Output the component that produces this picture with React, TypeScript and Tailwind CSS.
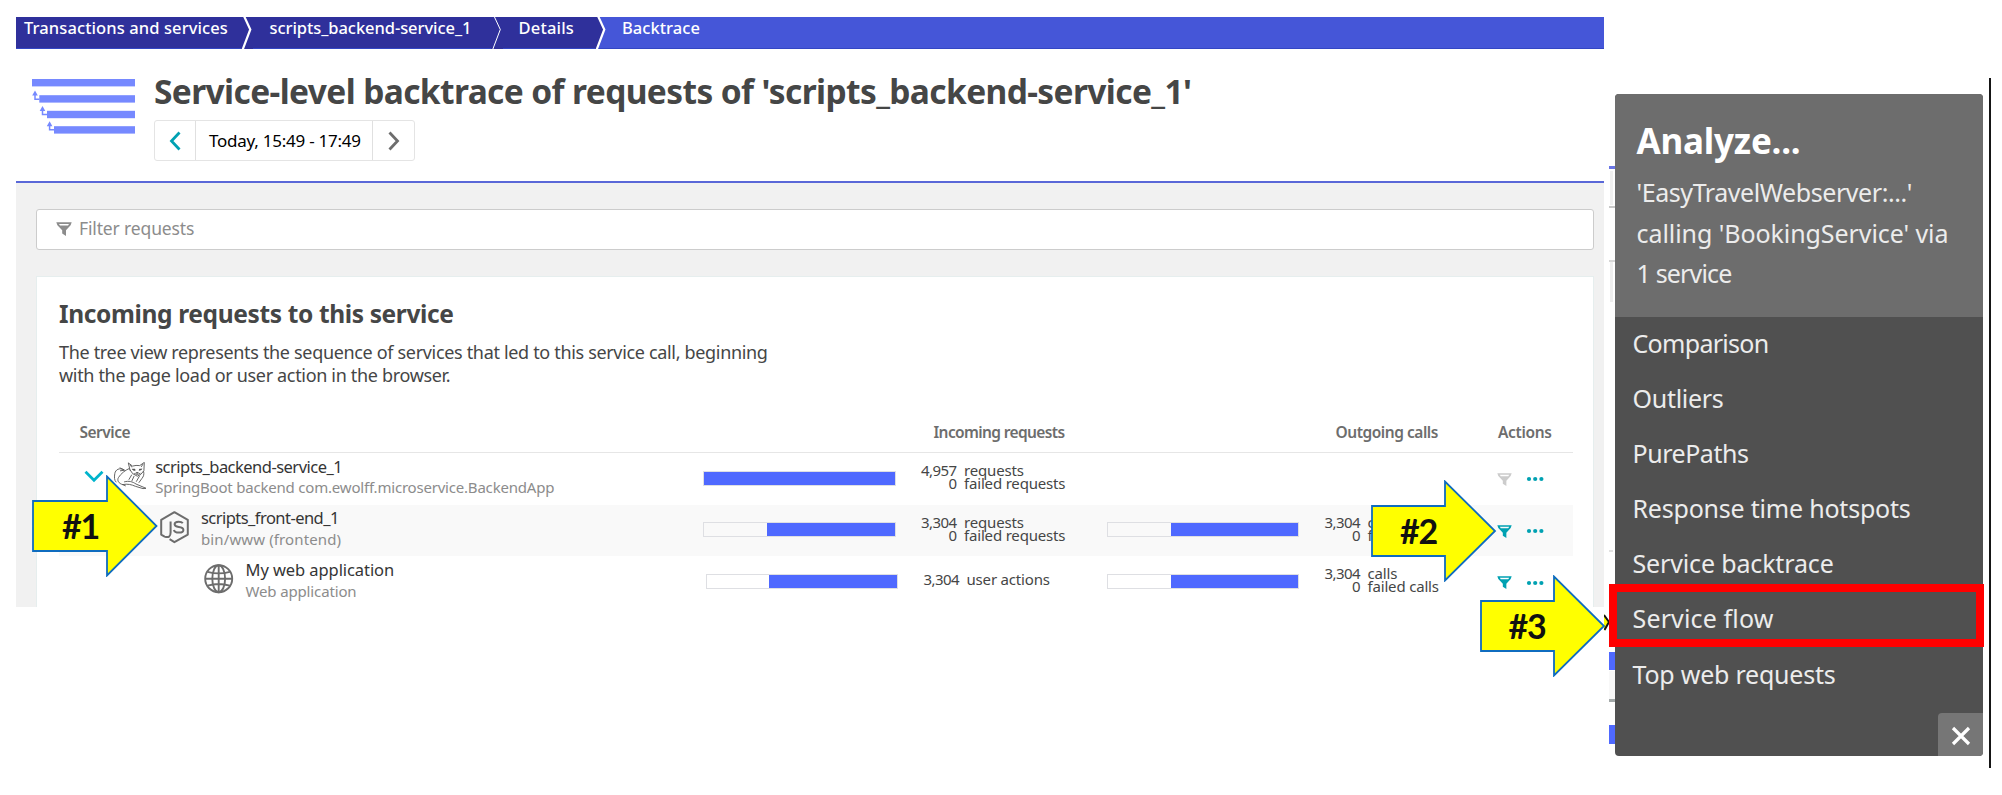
import type { ReactNode } from "react";

function Separator({ thin = false, last = false }: { thin?: boolean; last?: boolean }) {
  return (
    <svg width="12" height="32" viewBox="0 0 12 32" className="shrink-0">
      <path d="M0 0H3L9.5 12.5L1.5 32H0Z" fill="#2f309b" />
      {!last && <path d="M3 0H12V32H1.5L9.5 12.5Z" fill="#2f309b" />}
      <path d="M3 -1L9.3 12.5L1.5 33" fill="none" stroke="#fff" strokeWidth={thin ? 1 : 2.2} />
    </svg>
  );
}

function Funnel({ className }: { className: string }) {
  return (
    <svg width="16" height="15" viewBox="0 0 16 15" className={className}>
      <path
        fillRule="evenodd"
        fill="currentColor"
        d="M0.3 0.3H15.7L14.6 3.2L10 8.2V14L6.2 11.6V8.2L1.4 3.2ZM3 2L4 3.6H12L13 2Z"
      />
    </svg>
  );
}

function Dots() {
  return (
    <svg width="18" height="6" viewBox="0 0 18 6" fill="#00a1b2" className="block">
      <circle cx="3" cy="3" r="2.1" />
      <circle cx="9.2" cy="3" r="2.1" />
      <circle cx="15.4" cy="3" r="2.1" />
    </svg>
  );
}

function BacktraceIcon() {
  return (
    <svg width="104" height="56" viewBox="0 0 104 56" className="shrink-0" fill="#7689ff">
      <rect x="0" y="0" width="103" height="7.4" />
      <rect x="7.3" y="16.2" width="95.7" height="7.4" />
      <rect x="15" y="31.8" width="88" height="7.4" />
      <rect x="22" y="47.2" width="81" height="7.4" />
      <path d="M3 11.5L5.8 16.5H0.2ZM10.5 27L13.3 32H7.7ZM17.6 42.2L20.4 47.2H14.8Z" />
      <path
        d="M3 16V20.2H7.5M10.5 31V35.5H15M17.6 46.5V50.8H22"
        fill="none"
        stroke="#7689ff"
        strokeWidth="1.5"
      />
    </svg>
  );
}

function CatIcon() {
  return (
    <svg
      width="35"
      height="28"
      viewBox="0 0 35 28"
      fill="none"
      stroke="#555"
      strokeWidth="0.9"
      strokeLinejoin="round"
      strokeLinecap="round"
    >
      <path d="M17 8L15.3 0.9L19.5 4.1Q23 3 26.7 3.6L31.3 0.4L30.9 8.6Q28.6 12.7 24.3 14.2Q18.8 12.3 17 8Z" />
      <path d="M17.3 2.8L18.6 5M29.8 2.4L28.4 4.6M19.3 7.2L22 8.4M28.8 7L26.2 8.3M23.6 10.5H25.2L24.4 11.4ZM21.6 11.6L24.4 12.5L27 11.4" />
      <path d="M20.4 7.6H21.6M26.8 7.5H27.8" strokeWidth="1.6" />
      <path d="M16.2 6.5C12 8.4 8 11.5 5.5 15.5C3.8 18.3 5.6 21.6 9.6 22.6" />
      <path d="M10.5 7.6C6.5 5.4 2.5 7.6 1.8 11.5C1.2 15 1.2 18.5 3 20" />
      <path d="M7 5.9L11.6 8.2L7.4 8.8" />
      <path d="M11.5 19.8C16 18.6 19.4 19.6 23 22L33 26.3L30 26.6L22.4 24.3C18.6 22.6 14.8 21.6 9.6 22.6L12.4 23.8" />
      <path d="M30.6 9.5C31.4 12.2 30.6 14.6 28.8 16.6L26 20.5M18.6 13L16 17.4M21 14.3L19 18.6M26.5 14L23.4 19.4" />
    </svg>
  );
}

function NodeIcon() {
  return (
    <svg
      width="30"
      height="33"
      viewBox="0 0 30 33"
      fill="none"
      stroke="#6d6d6d"
      strokeWidth="2"
      strokeLinejoin="round"
    >
      <path d="M9.6 28.2L14.4 31.2L27.8 23.6V8.8L14.4 1.2L1.2 8.8V23.6L4.6 25.6Q10.6 27.6 10.6 21.6V10.6" />
      <path d="M22.8 12.2Q21.6 10.7 18.6 10.7Q14.6 10.7 14.6 13.3Q14.6 15.4 18.8 15.9Q23.4 16.4 23.4 18.9Q23.4 21.6 18.9 21.6Q14.6 21.6 13.9 18.9" />
    </svg>
  );
}

function GlobeIcon() {
  return (
    <svg width="30" height="30" viewBox="0 0 30 30" fill="none" stroke="#6d6d6d" strokeWidth="1.9">
      <circle cx="14.7" cy="14.7" r="13.5" />
      <ellipse cx="14.7" cy="14.7" rx="6.4" ry="13.5" />
      <path d="M14.7 1V28.4M1.2 14.7H28.2M3.6 7.8Q14.7 11 25.8 7.8M3.6 21.6Q14.7 18.4 25.8 21.6" />
    </svg>
  );
}

function Bar({ fill }: { fill: string }) {
  return (
    <div className="mt-[17.6px] flex h-[15px] w-[192.5px] shrink-0 justify-end border border-[#dedfe3]">
      <div className={`h-full bg-[#4f69ff] ${fill}`} />
    </div>
  );
}

type Metric = [string, string];

function Metrics({ lines, className }: { lines: Metric[]; className: string }) {
  return (
    <div className={`flex h-full shrink-0 flex-col text-[15px] leading-[12.7px] text-[#454646] ${className}`}>
      {lines.map(([value, label]) => (
        <div key={label} className="flex gap-[7.5px] whitespace-nowrap">
          <span className="w-[61px] text-right tracking-[-0.55px]">{value}</span>
          <span className="tracking-[-0.18px]">{label}</span>
        </div>
      ))}
    </div>
  );
}

function Row(props: {
  lead: ReactNode;
  title: ReactNode;
  subtitle: ReactNode;
  incoming: ReactNode;
  outgoing?: ReactNode;
  shaded?: boolean;
  muted?: boolean;
}) {
  return (
    <div className={`flex h-[51.6px] w-[1513.5px] ${props.shaded ? "bg-[#f9f9f9]" : ""}`}>
      <div className="flex w-[644px] shrink-0">
        {props.lead}
        <div className="whitespace-nowrap pt-[3.8px]">
          <div className="text-[16.5px] leading-[20.5px] text-[#353535]">{props.title}</div>
          <div className="text-[15px] leading-[20.5px] text-[#8c8c8c]">{props.subtitle}</div>
        </div>
      </div>
      <div className="flex w-[403.5px] shrink-0">{props.incoming}</div>
      <div className="flex w-[390px] shrink-0">{props.outgoing}</div>
      <div className="flex items-start">
        <Funnel className={`mt-[20px] h-[14px] w-[15px] ${props.muted ? "text-[#cccccc]" : "text-[#00a1b2]"}`} />
        <div className="ml-[14.5px] mt-[23.4px]">
          <Dots />
        </div>
      </div>
    </div>
  );
}

function Arrow({ label, place, head, labelClass }: { label: string; place: string; head: number; labelClass: string }) {
  const tip = head === 75 ? 124.5 : 124;
  return (
    <div className={`absolute h-[102px] w-[126px] ${place}`}>
      <svg width="126" height="102" viewBox="0 0 126 102" className="absolute inset-0">
        <path
          d={`M1 26H${head}V1.5L${tip} 51L${head} 100.5V76H1Z`}
          fill="#ffff00"
          stroke="#0f6cbf"
          strokeWidth="1.8"
        />
      </svg>
      <span className={`absolute top-[29px] font-['Lato',sans-serif] text-[34px] font-bold leading-[44px] tracking-[-1.2px] text-[#111] ${labelClass}`}>
        {label}
      </span>
    </div>
  );
}

const menu: [string, string][] = [
  ["Comparison", "tracking-[-0.7px]"],
  ["Outliers", "tracking-[-0.29px]"],
  ["PurePaths", "tracking-[-0.46px]"],
  ["Response time hotspots", "tracking-[-0.21px]"],
  ["Service backtrace", "tracking-[-0.15px]"],
  ["Service flow", "tracking-[0.15px]"],
  ["Top web requests", "tracking-[-0.23px]"],
];

export default function App() {
  return (
    <div className="relative flex h-[795px] w-[2002px] overflow-hidden bg-white font-['Noto_Sans',sans-serif]">
      <main className="w-[1604px] shrink-0 pl-4 pt-[17px]">
        <nav className="flex h-8 border-b border-[#3346c4] bg-[#4556d8] text-[16.5px] font-medium leading-[21px] text-white">
          <div className="w-[225px] shrink-0 bg-[#2f309b] pl-2 tracking-[0.1px]">Transactions and services</div>
          <Separator />
          <div className="w-[238px] shrink-0 bg-[#2f309b] pl-[16.5px] tracking-[-0.06px]">scripts_backend-service_1</div>
          <Separator thin />
          <div className="w-[92px] shrink-0 bg-[#2f309b] pl-[15.5px] tracking-[0.18px]">Details</div>
          <Separator last />
          <div className="pl-[15px] tracking-[0.05px]">Backtrace</div>
        </nav>

        <header className="flex h-[134px] border-b-2 border-[#5a68d8] pl-4 pt-[22px]">
          <div className="mt-2">
            <BacktraceIcon />
          </div>
          <div className="ml-[18px]">
            <h1 className="whitespace-nowrap text-[33.5px] font-bold leading-10 tracking-[-0.61px] text-[#454646]">
              Service-level backtrace of requests of 'scripts_backend-service_1'
            </h1>
            <div className="mt-[9px] flex h-[41px] w-[261px] rounded-[3px] border-[1.5px] border-[#e4e4e4]">
              <div className="flex w-[41px] items-center justify-center border-r border-[#e0e0e0]">
                <svg width="12" height="20" viewBox="0 0 12 20" fill="none" stroke="#00a1b2" strokeWidth="2.8">
                  <path d="M10.5 1.5L2.5 10L10.5 18.5" />
                </svg>
              </div>
              <div className="w-[177px] whitespace-nowrap border-r border-[#e0e0e0] pl-[13px] text-[17px] font-normal leading-[39px] tracking-[-0.25px] text-black">
                Today, 15:49 - 17:49
              </div>
              <div className="flex grow items-center justify-center">
                <svg width="12" height="20" viewBox="0 0 12 20" fill="none" stroke="#6d6d6d" strokeWidth="2.8">
                  <path d="M1.5 1.5L9.5 10L1.5 18.5" />
                </svg>
              </div>
            </div>
          </div>
        </header>

        <section className="h-[424px] bg-[#f1f1f1] pl-5 pr-[10px] pt-[26px]">
          <div className="flex h-[41px] items-center rounded-[3px] border-[1.5px] border-[#cccccc] bg-white pl-[18.5px]">
            <Funnel className="text-[#8c8c8c]" />
            <span className="-mt-[2.5px] ml-[7.5px] text-[17.5px] leading-6 tracking-[-0.14px] text-[#8c8c8c]">Filter requests</span>
          </div>

          <div className="mt-[26px] h-[331px] border border-b-0 border-[#e6eeee] bg-white pl-[22px] pt-5">
            <h2 className="mt-[0.8px] text-[24.5px] font-bold leading-8 tracking-[-0.36px] text-[#454646]">
              Incoming requests to this service
            </h2>
            <p className="mt-[11.4px] whitespace-nowrap text-[18px] leading-[22.7px] tracking-[-0.33px] text-[#454646]">
              The tree view represents the sequence of services that led to this service call, beginning
              <br />
              with the page load or user action in the browser.
            </p>

            <div className="mt-[35.2px] flex h-[31.3px] w-[1513.5px] whitespace-nowrap border-b-[1.5px] border-[#e6e6e6] text-[15.5px] font-semibold leading-5 text-[#6d6d6d]">
              <div className="w-[874.5px] pl-[20.5px] tracking-[-0.5px]">Service</div>
              <div className="w-[402px] tracking-[-0.62px]">Incoming requests</div>
              <div className="w-[162.5px] tracking-[-0.46px]">Outgoing calls</div>
              <div className="tracking-[-0.35px]">Actions</div>
            </div>

            <Row
              muted
              lead={
                <div className="flex w-[96.2px] shrink-0 items-start pl-[24.5px]">
                  <svg width="20" height="13" viewBox="0 0 20 13" fill="none" stroke="#00b4cc" strokeWidth="2.8" className="mt-[17px]">
                    <path d="M1.5 1.8L10 10.2L18.5 1.8" />
                  </svg>
                  <div className="ml-[9.5px] mt-[8.5px]">
                    <CatIcon />
                  </div>
                </div>
              }
              title={<span className="tracking-[-0.52px]">scripts_backend-service_1</span>}
              subtitle={<span className="tracking-[-0.2px]">SpringBoot backend com.ewolff.microservice.BackendApp</span>}
              incoming={
                <>
                  <Bar fill="w-full" />
                  <Metrics className="pt-[11.2px]" lines={[["4,957", "requests"], ["0", "failed requests"]]} />
                </>
              }
            />
            <Row
              shaded
              lead={
                <div className="w-[142px] shrink-0 pl-[100.5px] pt-1.5">
                  <NodeIcon />
                </div>
              }
              title={<span className="tracking-[-0.55px]">scripts_front-end_1</span>}
              subtitle={<span className="tracking-[0.12px]">bin/www (frontend)</span>}
              incoming={
                <>
                  <Bar fill="w-[127.8px]" />
                  <Metrics className="pt-[11.2px]" lines={[["3,304", "requests"], ["0", "failed requests"]]} />
                </>
              }
              outgoing={
                <>
                  <Bar fill="w-[127px]" />
                  <Metrics className="pt-[11.2px]" lines={[["3,304", "calls"], ["0", "failed calls"]]} />
                </>
              }
            />
            <Row
              lead={
                <div className="w-[186.5px] shrink-0 pl-[144.5px] pt-[7.4px]">
                  <GlobeIcon />
                </div>
              }
              title={<span className="tracking-[-0.08px]">My web application</span>}
              subtitle={<span className="tracking-[-0.14px]">Web application</span>}
              incoming={
                <div className="flex pl-[2.5px]">
                  <Bar fill="w-[127.8px]" />
                  <Metrics className="pt-[16.5px]" lines={[["3,304", "user actions"]]} />
                </div>
              }
              outgoing={
                <>
                  <Bar fill="w-[127px]" />
                  <Metrics className="pt-[11.2px]" lines={[["3,304", "calls"], ["0", "failed calls"]]} />
                </>
              }
            />
          </div>
        </section>
      </main>

      <div className="absolute left-[1608.5px] top-[166px] h-[590px] w-[10px]">
        <div className="absolute top-0 h-[3px] w-full bg-[#6a76e6]" />
        <div className="absolute left-px top-[5px] h-[34px] w-[3px] bg-[#f1f1f1]" />
        <div className="absolute top-[39.5px] h-[2px] w-full bg-[#c9c9c9]" />
        <div className="absolute top-[94px] h-[2px] w-full bg-[#d6d6d6]" />
        <div className="absolute left-px top-[96px] h-[40px] w-[3px] bg-[#eeeeee]" />
        <div className="absolute top-[384px] h-[2px] w-[4px] bg-[#e2e2e2]" />
        <div className="absolute top-[486px] h-[18px] w-full bg-[#4f69ff]" />
        <div className="absolute top-[505px] h-[28px] w-full bg-[#f8f8f8]" />
        <div className="absolute top-[533px] h-[2.5px] w-full bg-[#a3a9a9]" />
        <div className="absolute top-[559px] h-[19px] w-full bg-[#4f69ff]" />
      </div>

      <aside className="relative ml-[11px] mt-[93.5px] flex h-[662.5px] w-[368.3px] shrink-0 flex-col rounded-[4px] bg-[#505050]">
        <div className="h-[223.5px] shrink-0 rounded-t-[4px] bg-[#6d6d6d] pl-[21.5px] pt-[25.5px]">
          <h2 className="text-[35px] font-bold leading-[44px] tracking-[-0.2px] text-white">Analyze...</h2>
          <div className="mt-[9px] whitespace-nowrap text-[25px] leading-[40.6px] text-[#ececec]">
            <div className="tracking-[-0.43px]">'EasyTravelWebserver:...'</div>
            <div className="tracking-[-0.07px]">calling 'BookingService' via</div>
            <div className="tracking-[-0.83px]">1 service</div>
          </div>
        </div>
        <ul className="grow pl-[17.5px] text-[25px] leading-[52px] text-[#ececec]">
          {menu.map(([name, tracking]) => (
            <li key={name} className={`h-[55.1px] whitespace-nowrap ${tracking}`}>
              {name}
            </li>
          ))}
        </ul>
        <button className="absolute bottom-0 right-0 flex h-[43px] w-[45.5px] items-center justify-center rounded-br-[4px] rounded-tl-[4px] bg-[#767676]">
          <svg width="20" height="20" viewBox="0 0 20 20" stroke="#fff" strokeWidth="3.2" className="mt-0.5">
            <path d="M2 2L18 18M18 2L2 18" />
          </svg>
        </button>
      </aside>
      <div className="ml-[5.7px] mt-[78px] h-[690px] w-[2px] shrink-0 bg-[#151515]" />

      <svg width="6" height="18" viewBox="0 0 6 18" className="absolute left-[1603.5px] top-[614px]">
        <path d="M0 0L5 8L0 17Z" fill="#ffff00" />
        <path d="M0 1L5 8L0.5 16" fill="none" stroke="#111" strokeWidth="2" />
      </svg>
      <div className="absolute left-[1608.5px] top-[583.5px] h-[63px] w-[375px] border-8 border-[#ff0000]" />

      <Arrow label="#1" place="left-[32px] top-[474.5px]" head={75} labelClass="left-[30px]" />
      <Arrow label="#2" place="left-[1370.5px] top-[480px]" head={74} labelClass="left-[29.5px]" />
      <Arrow label="#3" place="left-[1479.5px] top-[575px]" head={74} labelClass="left-[29px]" />
    </div>
  );
}
